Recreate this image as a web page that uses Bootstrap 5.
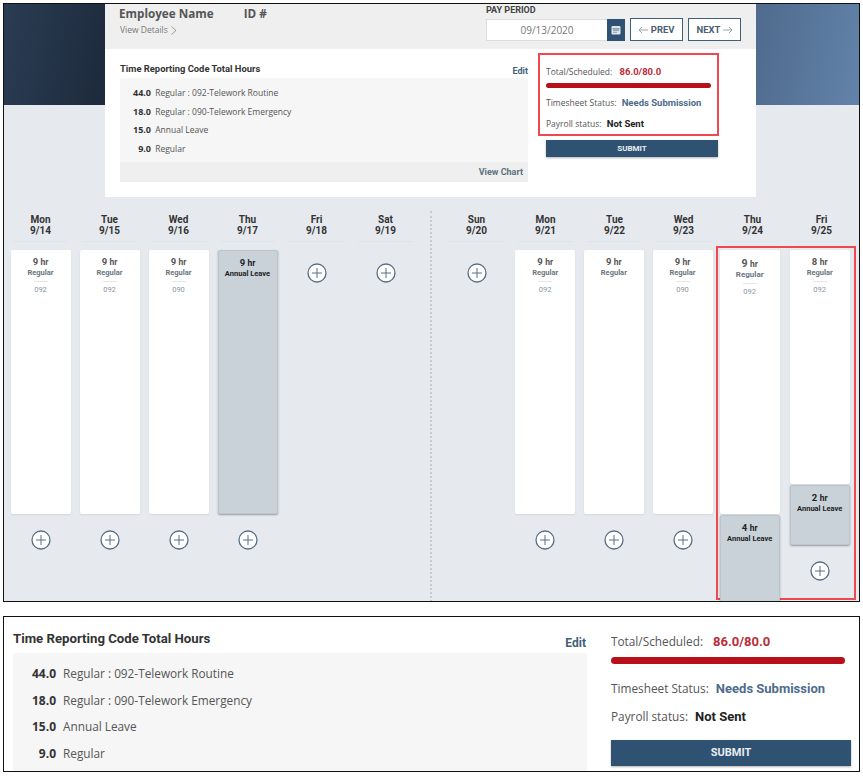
<!DOCTYPE html>
<html lang="en">
<head>
  <meta charset="UTF-8" />
  <title>Timesheet</title>
  <link href="https://cdn.jsdelivr.net/npm/bootstrap@5.3.0/dist/css/bootstrap.min.css" rel="stylesheet" />
  <style>
    body { background: #fff; margin: 0; font-family: "Open Sans", sans-serif; color: #444; }
    .shot-top {
      width: 857px; height: 599px; margin: 3px 0 0 3px;
      border: 1.5px solid #111; background: #e6eaef; overflow: hidden;
    }
    .hero {
      height: 193px; padding-left: 101px;
      background:
        linear-gradient(100deg, #2b3c53, #1c2a3b) left top / 101px 101px no-repeat,
        linear-gradient(100deg, #4f6a8c, #6283aa) right top / 103px 101px no-repeat;
    }
    .panel { width: 651px; height: 193px; background: #fff; }
    .panel-head { height: 45px; background: #efefef; padding: 1px 15px 0 14px; }
    .emp-name { font-size: 11.7px; font-weight: 700; color: #555; line-height: 16px; }
    .emp-id { margin-left: 27px; }
    .view-details { font-size: 8.5px; color: #777; line-height: 12px; margin-top: 3px; padding-left: 1px; }
    .pay-label { font: 700 9px/10px Roboto, sans-serif; color: #444; margin-bottom: 3px; }
    .date-box {
      width: 121px; height: 22px; background: #fff; border: 1px solid #ddd; border-right: 0;
      font-size: 10px; color: #777; text-align: center; line-height: 20px;
    }
    .cal-btn { width: 18px; height: 22px; background: #2f5272; }
    .nav-btn {
      width: 53px; height: 23px; border: 1px solid #3f6079; background: #fff; padding: 0; margin-left: 5px;
      font: 700 9.5px Roboto, sans-serif; color: #4b5f70; border-radius: 0;
    }
    .nav-btn svg { vertical-align: -1px; }
    .trc-side { width: 423px; padding: 13px 0 0 15px; }
    .trc-title { font: 700 9.4px/14px Roboto, sans-serif; color: #333; }
    .edit-link { font: 700 9px/14px Roboto, sans-serif; color: #3f6079; padding-top: 2px; }
    .trc-box { background: #f6f6f6; height: 104px; border-radius: 2px; }
    .trc-list { height: 84px; padding-top: 6px; }
    .trc-row { font-size: 8.5px; line-height: 18.7px; color: #555; white-space: nowrap; }
    .trc-hrs { display: inline-block; width: 31px; line-height: 1; text-align: right; margin-right: 2px; font-weight: 700; color: #333; font-size: 9px; }
    .trc-foot { height: 20px; background: #efefef; font: 700 9px/20px Roboto, sans-serif; color: #60707e; text-align: right; padding-right: 5px; }
    .status-side { padding: 4px 0 0 10px; }
    .status-box { width: 181px; height: 83px; border: 2px solid #f0484f; padding: 10px 6px 0 6px; }
    .stat-line { font-size: 8.5px; color: #555; line-height: 14px; white-space: nowrap; }
    .stat-line b { font: 700 9.5px Roboto, sans-serif; margin-left: 3px; }
    .stat-line b.val-red { margin-left: 5px; }
    .stat-gap { margin-bottom: 7px; }
    .val-red { color: #b92c3a; }
    .val-blue { color: #4d6c8c; }
    .val-dark { color: #222; }
    .red-bar { height: 4.5px; background: #b81019; border-radius: 3px; margin: 4px 0 8px; }
    .submit-btn {
      display: block; width: 172px; height: 17px; margin: 4px 0 0 8px; padding: 0; border: 0; border-radius: 0;
      background: #2f5272; color: #e9eef2; font: 700 8px/17px Roboto, sans-serif; box-shadow: 0 1px 2px rgba(0,0,0,.3);
    }
    .weeks { height: 404px; padding: 17px 0 0 2px; }
    .week-block { width: 414px; }
    .week-rule { width: 22px; margin-top: -3px; }
    .week-rule::after { content: ""; display: block; width: 0; height: 395px; margin-left: 10px; border-left: 2px dotted #c3cad1; }
    .day-head { width: 69px; text-align: center; font: 700 10px/11px Roboto, sans-serif; color: #333; }
    .day-head span { display: block; margin: 0 7px; padding-bottom: 5px; border-bottom: 1px solid #e0e4e8; }
    .day-body { height: 350px; margin-top: 8px; }
    .day-col { width: 69px; padding: 0 4px 0 4.5px; text-align: center; }
    .shift { width: 60px; height: 264px; background: #fff; border-radius: 2px; padding-top: 6px; box-shadow: 0 1px 2px rgba(0,0,0,.08); font-family: Roboto, sans-serif; }
    .shift-gray { background: #c9d1d9; box-shadow: 0 1px 2px rgba(0,0,0,.35); border: 1px solid #bcc5ce; }
    .shift-h { font-size: 9.5px; font-weight: 700; color: #555; line-height: 11px; }
    .shift-h small { font-size: 8.5px; }
    .shift-k { font-size: 7.5px; font-weight: 700; color: #6b7680; line-height: 10px; }
    .shift-gray .shift-h, .shift-gray .shift-k { color: #222; }
    .shift-c { font-size: 7.5px; color: #8b97a3; line-height: 10px; margin-top: 3px; }
    .shift-c::before { content: ""; display: block; width: 14px; margin: 0 auto 3px; border-top: 1px solid #e5e5e5; }
    .add-btn { display: block; width: 20px; height: 20px; margin: 0 auto; }
    .add-top { margin-top: 13px; }
    .add-below { margin-top: 16px; }
    .red-frame { display: flex; gap: 10px; width: 141px; height: 354px; margin: -4px 0 0 -1px; padding: 2px 0 0 2px; border: 2px solid #f0484f; }
    .red-frame .day-col { width: 60px; flex: none; padding: 0; }
    .tall-a { height: 264px; padding-top: 8px; }
    .tall-a .shift-h { font-size: 10.5px; }
    .tall-a .shift-k { font-size: 8px; }
    .tall-b { height: 234px; }
    .leave-a { height: 90px; margin-top: 1px; }
    .leave-b { height: 60px; margin-top: 1px; }
    .shot-bottom {
      width: 857px; height: 156px; margin: 14px 0 0 3px; border: 1.5px solid #111; background: #fff; overflow: hidden;
    }
    .big-left { width: 583px; padding: 13px 0 0 9px; }
    .big-title { font: 700 13.2px/17px Roboto, sans-serif; color: #333; }
    .big-edit { font: 700 12px/17px Roboto, sans-serif; color: #3f6079; padding-top: 5px; margin-right: 1px; }
    .big-box { background: #f6f6f6; height: 120px; margin-top: 1px; padding-top: 7px; border-radius: 3px 3px 0 0; }
    .big-row { font-size: 11.8px; line-height: 26.6px; color: #555; white-space: nowrap; }
    .big-hrs { display: inline-block; width: 43px; line-height: 1; text-align: right; margin-right: 7px; font-weight: 700; color: #333; font-size: 12px; }
    .big-right { width: 240px; margin-left: 24px; padding-top: 15px; }
    .big-stat { font-size: 11.8px; color: #555; line-height: 18px; white-space: nowrap; }
    .big-stat b { font: 700 13px Roboto, sans-serif; margin-left: 4px; }
    .big-stat b.val-red { margin-left: 7px; }
    .big-gap { margin-bottom: 10px; }
    .big-bar { height: 7px; background: #b81019; border-radius: 4px; margin: 7px 6px 15px 0; }
    .big-submit {
      display: block; width: 240px; height: 26px; margin-top: 15px; padding: 0; border: 0; border-radius: 0;
      background: #2f5272; color: #e9eef2; font: 700 11px/26px Roboto, sans-serif; box-shadow: 0 1px 2px rgba(0,0,0,.3);
    }
  </style>
</head>
<body>
  <svg width="0" height="0" class="d-block">
    <symbol id="plus-btn" viewBox="0 0 20 20">
      <circle cx="10" cy="10" r="9" fill="#fff" stroke="#566f85" stroke-width="1.3"/>
      <path d="M10 5v10M5 10h10" stroke="#566f85" stroke-width="1" fill="none"/>
    </symbol>
  </svg>

  <div class="shot-top">
    <div class="hero">
      <div class="panel">
        <div class="panel-head d-flex justify-content-between">
          <div>
            <div class="emp-name">Employee Name <span class="emp-id">ID #</span></div>
            <div class="view-details">View Details
              <svg width="7" height="9" viewBox="0 0 7 9"><path d="M1.5 .5 6 4.5 1.5 8.5" fill="none" stroke="#888" stroke-width=".8"/></svg>
            </div>
          </div>
          <div>
            <div class="pay-label">PAY PERIOD</div>
            <div class="d-flex align-items-center">
              <div class="date-box">09/13/2020</div>
              <div class="cal-btn d-flex align-items-center justify-content-center">
                <svg width="10" height="10" viewBox="0 0 10 10"><rect x=".5" y="1" width="9" height="8.5" rx="1" fill="#dfe6ec"/><rect x="1.5" y="3.5" width="7" height=".8" fill="#2f5272"/><path d="M2.5 5.5h1M4.5 5.5h1M6.5 5.5h1M2.5 7.3h1M4.5 7.3h1" stroke="#2f5272" stroke-width=".9"/></svg>
              </div>
              <button class="btn nav-btn"><svg width="10" height="8" viewBox="0 0 10 8"><path d="M10 4H1M4 1 1 4l3 3" fill="none" stroke="#8f9ba6" stroke-width=".9"/></svg> PREV</button>
              <button class="btn nav-btn">NEXT <svg width="10" height="8" viewBox="0 0 10 8"><path d="M0 4h9M6 1l3 3-3 3" fill="none" stroke="#8f9ba6" stroke-width=".9"/></svg></button>
            </div>
          </div>
        </div>
        <div class="d-flex">
          <div class="trc-side">
            <div class="d-flex justify-content-between">
              <div class="trc-title">Time Reporting Code Total Hours</div>
              <div class="edit-link">Edit</div>
            </div>
            <div class="trc-box">
              <div class="trc-list">
                <div class="trc-row"><span class="trc-hrs">44.0</span> Regular : 092-Telework Routine</div>
                <div class="trc-row"><span class="trc-hrs">18.0</span> Regular : 090-Telework Emergency</div>
                <div class="trc-row"><span class="trc-hrs">15.0</span> Annual Leave</div>
                <div class="trc-row"><span class="trc-hrs">9.0</span> Regular</div>
              </div>
              <div class="trc-foot">View Chart</div>
            </div>
          </div>
          <div class="status-side">
            <div class="status-box">
              <div class="stat-line">Total/Scheduled: <b class="val-red">86.0/80.0</b></div>
              <div class="red-bar"></div>
              <div class="stat-line stat-gap">Timesheet Status: <b class="val-blue">Needs Submission</b></div>
              <div class="stat-line">Payroll status: <b class="val-dark">Not Sent</b></div>
            </div>
            <button class="btn submit-btn">SUBMIT</button>
          </div>
        </div>
      </div>
    </div>

    <div class="weeks d-flex">
      <div class="week-block">
        <div class="d-flex">
          <div class="day-head">Mon<span>9/14</span></div>
          <div class="day-head">Tue<span>9/15</span></div>
          <div class="day-head">Wed<span>9/16</span></div>
          <div class="day-head">Thu<span>9/17</span></div>
          <div class="day-head">Fri<span>9/18</span></div>
          <div class="day-head">Sat<span>9/19</span></div>
        </div>
        <div class="day-body d-flex">
          <div class="day-col">
            <div class="shift"><div class="shift-h">9 <small>hr</small></div><div class="shift-k">Regular</div><div class="shift-c">092</div></div>
            <svg class="add-btn add-below"><use href="#plus-btn"/></svg>
          </div>
          <div class="day-col">
            <div class="shift"><div class="shift-h">9 <small>hr</small></div><div class="shift-k">Regular</div><div class="shift-c">092</div></div>
            <svg class="add-btn add-below"><use href="#plus-btn"/></svg>
          </div>
          <div class="day-col">
            <div class="shift"><div class="shift-h">9 <small>hr</small></div><div class="shift-k">Regular</div><div class="shift-c">090</div></div>
            <svg class="add-btn add-below"><use href="#plus-btn"/></svg>
          </div>
          <div class="day-col">
            <div class="shift shift-gray"><div class="shift-h">9 <small>hr</small></div><div class="shift-k">Annual Leave</div></div>
            <svg class="add-btn add-below"><use href="#plus-btn"/></svg>
          </div>
          <div class="day-col"><svg class="add-btn add-top"><use href="#plus-btn"/></svg></div>
          <div class="day-col"><svg class="add-btn add-top"><use href="#plus-btn"/></svg></div>
        </div>
      </div>

      <div class="week-rule"></div>

      <div class="week-block">
        <div class="d-flex">
          <div class="day-head">Sun<span>9/20</span></div>
          <div class="day-head">Mon<span>9/21</span></div>
          <div class="day-head">Tue<span>9/22</span></div>
          <div class="day-head">Wed<span>9/23</span></div>
          <div class="day-head">Thu<span>9/24</span></div>
          <div class="day-head">Fri<span>9/25</span></div>
        </div>
        <div class="day-body d-flex">
          <div class="day-col"><svg class="add-btn add-top"><use href="#plus-btn"/></svg></div>
          <div class="day-col">
            <div class="shift"><div class="shift-h">9 <small>hr</small></div><div class="shift-k">Regular</div><div class="shift-c">092</div></div>
            <svg class="add-btn add-below"><use href="#plus-btn"/></svg>
          </div>
          <div class="day-col">
            <div class="shift"><div class="shift-h">9 <small>hr</small></div><div class="shift-k">Regular</div></div>
            <svg class="add-btn add-below"><use href="#plus-btn"/></svg>
          </div>
          <div class="day-col">
            <div class="shift"><div class="shift-h">9 <small>hr</small></div><div class="shift-k">Regular</div><div class="shift-c">090</div></div>
            <svg class="add-btn add-below"><use href="#plus-btn"/></svg>
          </div>
          <div class="red-frame">
            <div class="day-col">
              <div class="shift tall-a"><div class="shift-h">9 <small>hr</small></div><div class="shift-k">Regular</div><div class="shift-c">092</div></div>
              <div class="shift shift-gray leave-a"><div class="shift-h">4 <small>hr</small></div><div class="shift-k">Annual Leave</div></div>
            </div>
            <div class="day-col">
              <div class="shift tall-b"><div class="shift-h">8 <small>hr</small></div><div class="shift-k">Regular</div><div class="shift-c">092</div></div>
              <div class="shift shift-gray leave-b"><div class="shift-h">2 <small>hr</small></div><div class="shift-k">Annual Leave</div></div>
              <svg class="add-btn add-below"><use href="#plus-btn"/></svg>
            </div>
          </div>
        </div>
      </div>
    </div>
  </div>

  <div class="shot-bottom d-flex">
    <div class="big-left">
      <div class="d-flex justify-content-between">
        <div class="big-title">Time Reporting Code Total Hours</div>
        <div class="big-edit">Edit</div>
      </div>
      <div class="big-box">
        <div class="big-row"><span class="big-hrs">44.0</span>Regular : 092-Telework Routine</div>
        <div class="big-row"><span class="big-hrs">18.0</span>Regular : 090-Telework Emergency</div>
        <div class="big-row"><span class="big-hrs">15.0</span>Annual Leave</div>
        <div class="big-row"><span class="big-hrs">9.0</span>Regular</div>
      </div>
    </div>
    <div class="big-right">
      <div class="big-stat">Total/Scheduled: <b class="val-red">86.0/80.0</b></div>
      <div class="big-bar"></div>
      <div class="big-stat big-gap">Timesheet Status: <b class="val-blue">Needs Submission</b></div>
      <div class="big-stat">Payroll status: <b class="val-dark">Not Sent</b></div>
      <button class="btn big-submit">SUBMIT</button>
    </div>
  </div>
  <script src="https://cdn.jsdelivr.net/npm/bootstrap@5.3.0/dist/js/bootstrap.bundle.min.js"></script>
</body>
</html>
